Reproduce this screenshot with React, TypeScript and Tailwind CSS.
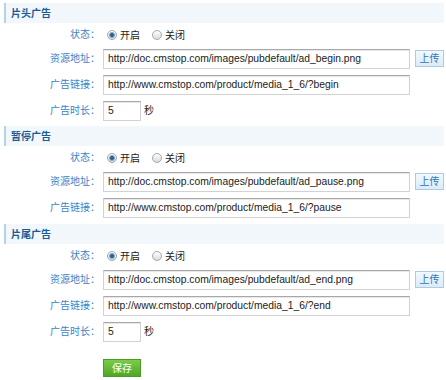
const cjk = "font-['Liberation_Sans','Noto_Sans_CJK_SC',sans-serif]";

function Radio({ checked, label }: { checked?: boolean; label: string }) {
  return (
    <span className="flex items-center">
      <span className="w-[10px] h-[10px] rounded-full border border-[#a3a9ae] bg-gradient-to-b from-[#fdfdfd] to-[#d9dde0] flex items-center justify-center">
        {checked && (
          <span className="w-[6px] h-[6px] rounded-full bg-[#2c5d8c] border border-[#7fa9cf]" />
        )}
      </span>
      <span className="ml-[3px] text-[10px] text-[#222]">{label}</span>
    </span>
  );
}

function Label({ children }: { children: string }) {
  return (
    <div className="w-[96px] text-right text-[10px] text-[#3a84c6] leading-[20px] shrink-0">
      {children}
    </div>
  );
}

function TextInput({ value, wide }: { value: string; wide?: boolean }) {
  return (
    <div
      className={`${wide ? "w-[307px]" : "w-[38px]"} h-[20px] border border-[#d2d2d2] border-t-[#a8a8a8] bg-white shadow-[inset_0_1px_1px_#e6e6e6] pl-[4px] flex items-center text-[10.3px] text-[#222] whitespace-nowrap overflow-hidden`}
    >
      {value}
    </div>
  );
}

type Ad = {
  title: string;
  src: string;
  link: string;
  duration?: string;
};

const ads: Ad[] = [
  {
    title: "片头广告",
    src: "http://doc.cmstop.com/images/pubdefault/ad_begin.png",
    link: "http://www.cmstop.com/product/media_1_6/?begin",
    duration: "5",
  },
  {
    title: "暂停广告",
    src: "http://doc.cmstop.com/images/pubdefault/ad_pause.png",
    link: "http://www.cmstop.com/product/media_1_6/?pause",
  },
  {
    title: "片尾广告",
    src: "http://doc.cmstop.com/images/pubdefault/ad_end.png",
    link: "http://www.cmstop.com/product/media_1_6/?end",
    duration: "5",
  },
];

function AdSection({ ad }: { ad: Ad }) {
  return (
    <div>
      {/* Section header */}
      <div className="h-[20px] bg-[#f1f7fb] border-l-2 border-[#b3d3ea] pl-[5px] flex items-center text-[10px] font-bold text-[#1b5a94]">
        {ad.title}
      </div>

      {/* Status */}
      <div className="h-[24px] flex items-center">
        <Label>状态：</Label>
        <div className="ml-[7px] flex items-center gap-[12px]">
          <Radio checked label="开启" />
          <Radio label="关闭" />
        </div>
      </div>

      {/* Resource */}
      <div className="h-[26px] flex items-start pt-[2px]">
        <Label>资源地址：</Label>
        <div className="ml-[3px]">
          <TextInput wide value={ad.src} />
        </div>
        <button className="ml-[5px] mt-[1px] w-[29px] h-[17px] border border-[#a9cbe6] bg-gradient-to-b from-[#f3f9fd] to-[#dcebf7] text-[10px] text-[#2a74b9] flex items-center justify-center">
          上传
        </button>
      </div>

      {/* Link */}
      <div className="h-[26px] flex items-start pt-[2px]">
        <Label>广告链接：</Label>
        <div className="ml-[3px]">
          <TextInput wide value={ad.link} />
        </div>
      </div>

      {/* Duration */}
      {ad.duration && (
        <div className="h-[26px] flex items-start pt-[2px]">
          <Label>广告时长：</Label>
          <div className="ml-[3px]">
            <TextInput value={ad.duration} />
          </div>
          <span className="ml-[3px] text-[10px] leading-[20px] text-[#222]">秒</span>
        </div>
      )}
    </div>
  );
}

export default function App() {
  return (
    <div className={`w-[446px] h-[380px] overflow-hidden bg-white pt-[3px] pl-[4px] pr-[2px] ${cjk}`}>
      <AdSection ad={ads[0]} />
      <div className="mt-[1px]">
        <AdSection ad={ads[1]} />
      </div>
      <div className="mt-[2px]">
        <AdSection ad={ads[2]} />
      </div>

      {/* Save */}
      <div className="mt-[13px] pl-[99px]">
        <button className="w-[38px] h-[18px] border border-[#4b9a22] bg-gradient-to-b from-[#7ccc4a] to-[#4fa624] text-[10px] text-white flex items-center justify-center">
          保存
        </button>
      </div>
    </div>
  );
}
